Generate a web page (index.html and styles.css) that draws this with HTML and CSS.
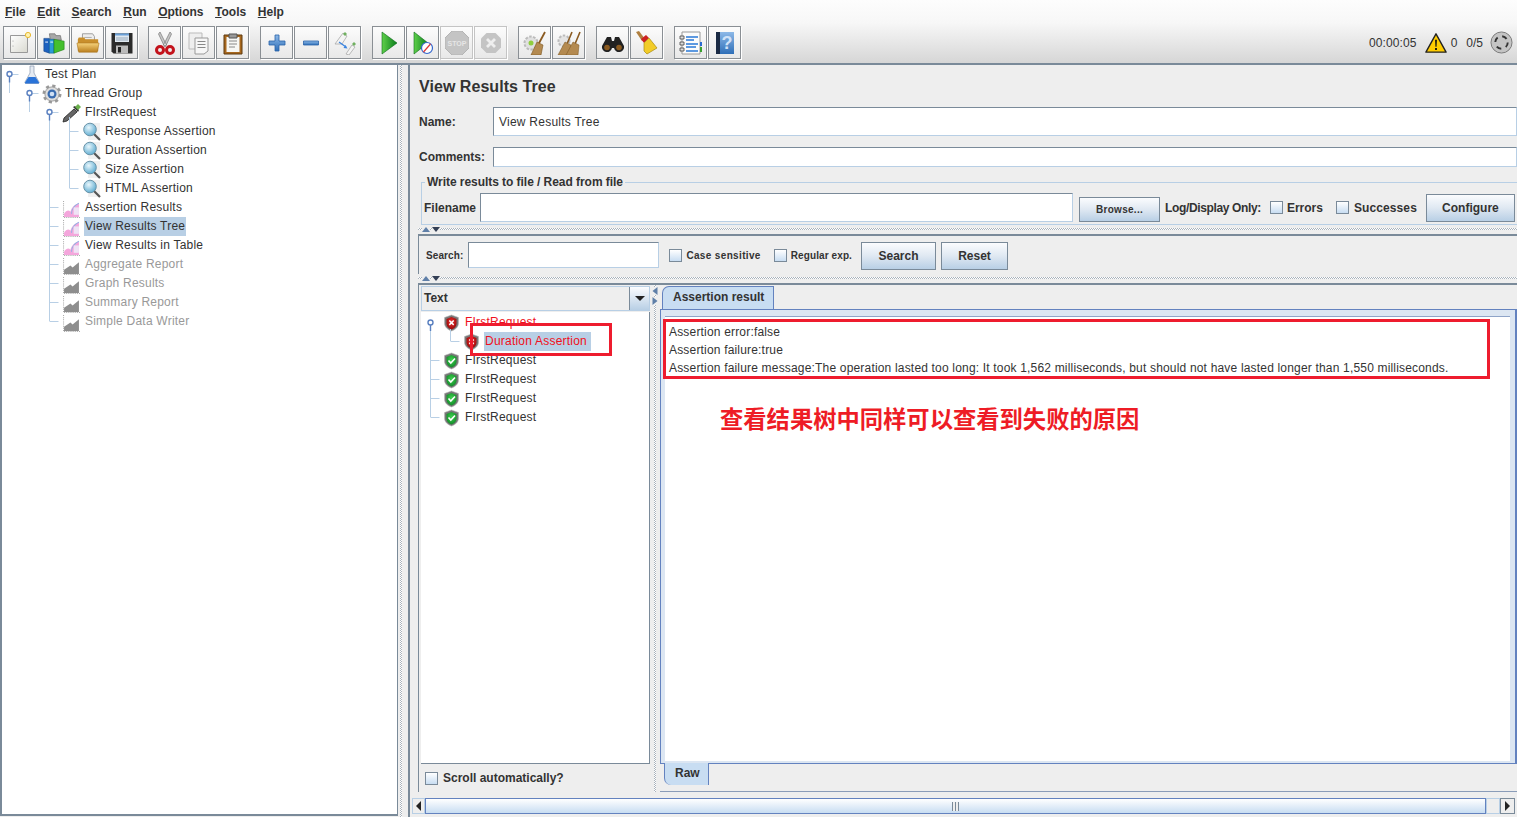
FILE: index.html
```html
<!DOCTYPE html>
<html lang="en">
<head>
<meta charset="utf-8">
<title>Apache JMeter</title>
<link rel="stylesheet" href="styles.css">
</head>
<body>
<svg class="defs" width="0" height="0" aria-hidden="true">
  <defs>
    <linearGradient id="gPage" x1="0" y1="0" x2="1" y2="1"><stop offset="0" stop-color="#fff"/><stop offset="1" stop-color="#d9d9d0"/></linearGradient>
    <linearGradient id="gFolder" x1="0" y1="0" x2="0" y2="1"><stop offset="0" stop-color="#f6d27a"/><stop offset="1" stop-color="#b97d1c"/></linearGradient>
    <linearGradient id="gBlue" x1="0" y1="0" x2="0" y2="1"><stop offset="0" stop-color="#8db9e8"/><stop offset="1" stop-color="#2f6fb8"/></linearGradient>
    <linearGradient id="gGreen" x1="0" y1="0" x2="1" y2="0"><stop offset="0" stop-color="#5fd04a"/><stop offset="1" stop-color="#0a7d1c"/></linearGradient>
    <radialGradient id="gLens" cx=".4" cy=".35" r=".7"><stop offset="0" stop-color="#e8f6fc"/><stop offset="1" stop-color="#58a9cf"/></radialGradient>
    <radialGradient id="gRed" cx=".5" cy=".4" r=".7"><stop offset="0" stop-color="#e33"/><stop offset="1" stop-color="#800"/></radialGradient>
    <radialGradient id="gGrn" cx=".5" cy=".4" r=".7"><stop offset="0" stop-color="#3fd24f"/><stop offset="1" stop-color="#0a7d22"/></radialGradient>

    <symbol id="i-new" viewBox="0 0 24 24"><path d="M2.500 4.500h17v17h-17z" fill="url(#gPage)" stroke="#999"/><circle cx="5" cy="10" r=".6" fill="#999"/><circle cx="5" cy="15" r=".6" fill="#999"/><circle cx="20" cy="4" r="2.600" fill="#fff3b0" stroke="#e8b830"/></symbol>
    <symbol id="i-templates" viewBox="0 0 26 24"><path d="M8 2h6l1 2h5l1 5H9z" fill="#a8a8a8" stroke="#666" stroke-width=".7"/><path d="M2 7h6v16l-6-2z" fill="#1d62c0" stroke="#0c3a80" stroke-width=".6"/><path d="M8 8h5v15H8z" fill="#2b9bd8" stroke="#0c5a90" stroke-width=".6"/><path d="M13 8l11 2v9l-11 4z" fill="#45c02e" stroke="#1e7a14" stroke-width=".6"/><path d="M3.500 11h3M9 11h3" stroke="#fff"/></symbol>
    <symbol id="i-open" viewBox="0 0 26 24"><path d="M7 2h11l2 3v10H7z" fill="#eee" stroke="#999"/><path d="M9 6h8M9 9h8" stroke="#aaa"/><path d="M2 8l1-2h6l1 2h14v13H2z" fill="#c98f2c"/><path d="M1 12h24l-2 10H3z" fill="url(#gFolder)" stroke="#a87420" stroke-width=".6"/></symbol>
    <symbol id="i-save" viewBox="0 0 24 24"><path d="M1.500 2h21v20.500h-19l-2-2z" fill="#2b2b2b"/><path d="M5 2.500h14v8.500H5z" fill="#dfe8f0"/><path d="M5 2.500h14v2H5z" fill="#6aa0d8"/><path d="M6 7h12M6 9h12" stroke="#9ab"/><path d="M6 14.500h12v8H6z" fill="#bbb"/><path d="M8 16h3v5.500H8z" fill="#222"/></symbol>
    <symbol id="i-cut" viewBox="0 0 24 24"><path d="M7 1l6.500 13-2 1.500L5.500 3zM17 1l-6.500 13 2 1.500L18.500 3z" fill="#c8c8c8" stroke="#777" stroke-width=".7"/><circle cx="7" cy="19" r="3.500" fill="none" stroke="#c3131c" stroke-width="3"/><circle cx="17" cy="19" r="3.500" fill="none" stroke="#c3131c" stroke-width="3"/></symbol>
    <symbol id="i-copy" viewBox="0 0 24 24"><path d="M2 2h13v16H2z" fill="#eee" stroke="#bbb"/><path d="M8 7h13v13l-4 3H8z" fill="#f6f6f6" stroke="#999"/><path d="M10.500 10.500h8M10.500 13.500h8M10.500 16.500h8" stroke="#888"/></symbol>
    <symbol id="i-paste" viewBox="0 0 24 24"><path d="M3 4h18v19H3z" fill="#a8681e" stroke="#5e3a10"/><path d="M5.500 6h13v15h-13z" fill="#f7f7f4"/><path d="M8 3h8v4H8z" fill="#999" stroke="#555"/><path d="M8 10h8M8 13h8M8 16h6" stroke="#888"/></symbol>
    <symbol id="i-plus" viewBox="0 0 24 24"><path d="M10 4h4v6h6v4h-6v6h-4v-6H4v-4h6z" fill="url(#gBlue)" stroke="#2a62a8" stroke-width=".8"/></symbol>
    <symbol id="i-minus" viewBox="0 0 24 24"><path d="M4.500 10h15v4h-15z" fill="url(#gBlue)" stroke="#2a62a8" stroke-width=".8"/></symbol>
    <symbol id="i-toggle" viewBox="0 0 24 24"><path d="M2 13L10 2l4 3-5 8z" fill="#f4f4f4" stroke="#aaa" stroke-width=".8"/><path d="M10 3l2-2 2 2-2 2z" fill="#70b060"/><path d="M13 23l6-9 3 2-6 8z" fill="#f4f4f4" stroke="#aaa" stroke-width=".8"/><path d="M19 13l2-2 2 2-2 2z" fill="#70b060"/><path d="M6 11l7 5" stroke="#3a84e0" stroke-width="1.300"/><path d="M14.500 17.500l-4-.5 2-3z" fill="#3a84e0"/></symbol>
    <symbol id="i-play" viewBox="0 0 24 24"><path d="M5 1l15 11L5 23z" fill="url(#gGreen)" stroke="#0a6a18" stroke-width=".6"/></symbol>
    <symbol id="i-playno" viewBox="0 0 24 24"><path d="M3 1l14 11L3 23z" fill="url(#gGreen)" stroke="#0a6a18" stroke-width=".6"/><circle cx="16" cy="17" r="5.500" fill="#fff" stroke="#3366cc" stroke-width="1.200"/><path d="M12.500 21l7-8" stroke="#d33" stroke-width="1.200"/></symbol>
    <symbol id="i-stop" viewBox="0 0 24 24"><path d="M7 0h10l7 7v10l-7 7H7l-7-7V7z" fill="#c4c4c4" stroke="#b4b4b4"/><text x="12" y="15" class="stop-txt">STOP</text></symbol>
    <symbol id="i-shut" viewBox="0 0 24 24"><path d="M7.500 2h9L22 7.500v9L16.500 22h-9L2 16.500v-9z" fill="#c4c4c4"/><path d="M8 8l8 8M16 8l-8 8" stroke="#eee" stroke-width="2.800"/></symbol>
    <symbol id="i-clear" viewBox="0 0 24 24"><circle cx="8" cy="12" r="6.500" fill="#e0e0e0" stroke="#bbb" stroke-dasharray="2.500 1.500" stroke-width="2"/><circle cx="8" cy="12" r="2.500" fill="#8fce3e"/><path d="M22 1l-7 13" stroke="#8a5a20" stroke-width="1.800"/><path d="M14 11l6 3 -2 10H8z" fill="#b48a50" stroke="#7a5520" stroke-width=".6"/></symbol>
    <symbol id="i-clearall" viewBox="0 0 24 24"><circle cx="7" cy="10" r="5.500" fill="#e4e4e4" stroke="#bbb" stroke-dasharray="2.500 1.500" stroke-width="2"/><path d="M15 1l-5 12M23 1l-5 12" stroke="#8a5a20" stroke-width="1.600"/><path d="M8 11l6 3 -1 10H1z" fill="#b48a50" stroke="#7a5520" stroke-width=".5"/><path d="M16 11l6 3 -1 10H9z" fill="#b48a50" stroke="#7a5520" stroke-width=".5"/></symbol>
    <symbol id="i-binoc" viewBox="0 0 24 24"><path d="M6 6h4l1 4h2l1-4h4l5 9a5 5 0 1 1-10 2h-2a5 5 0 1 1-10-2z" fill="#222"/><circle cx="6" cy="16.500" r="2.800" fill="#8a5a20"/><circle cx="18" cy="16.500" r="2.800" fill="#8a5a20"/></symbol>
    <symbol id="i-broom" viewBox="0 0 24 24"><path d="M1 1l3-1 6 8-3 2z" fill="#b08040"/><path d="M6 8l5-4 3 3-5 5z" fill="#cc2222"/><path d="M9 12l5-5 8 10-10 6-3-3z" fill="#f2cc28" stroke="#a88a10" stroke-width=".7"/></symbol>
    <symbol id="i-list" viewBox="0 0 24 24"><path d="M3 1h18v22H3z" fill="#fbfbfb" stroke="#999"/><path d="M1 5h4v3H1zM1 11h4v3H1zM1 17h4v3H1z" fill="#ddd" stroke="#444" stroke-width=".8"/><path d="M7 6h12M7 9h8M7 13h12M7 16h10M7 20h12" stroke="#2a7ad8" stroke-width="1.300"/><path d="M21 11h2v4h-2z" fill="#2a6ad0"/><path d="M21 16h2v5h-2z" fill="#3aa030"/></symbol>
    <symbol id="i-help" viewBox="0 0 24 24"><path d="M3 1h18v22H3z" fill="url(#gBlue)"/><path d="M3 1h4v22H3z" fill="#1a2a44"/><text x="14" y="18" class="help-txt">?</text></symbol>
    <symbol id="i-warn" viewBox="0 0 24 24"><path d="M12 2l11 20H1z" fill="#fc0" stroke="#222" stroke-width="1.500" stroke-linejoin="round"/><path d="M11 8.500h2l-.4 7.500h-1.200zM11 17.500h2v2h-2z" fill="#111"/></symbol>
    <symbol id="i-global" viewBox="0 0 24 24"><circle cx="12" cy="12" r="11" fill="#c4c4c4" stroke="#777"/><circle cx="12" cy="12" r="6.500" fill="none" stroke="#333" stroke-width="2" stroke-dasharray="5.200 5"/></symbol>

    <symbol id="i-flask" viewBox="0 0 20 20"><path d="M8 1h4v7l5 9a1 1 0 0 1-1 1.500H4A1 1 0 0 1 3 17l5-9z" fill="#e4eaf2" stroke="#8a9ab0" stroke-width=".7"/><path d="M6.500 12h7l3.500 5.500a.7.7 0 0 1-.7 1H3.700a.7.7 0 0 1-.7-1z" fill="#2a73d8"/></symbol>
    <symbol id="i-gear" viewBox="0 0 20 20"><circle cx="10" cy="10" r="8" fill="#e6e6e6" stroke="#999" stroke-width="3" stroke-dasharray="3.100 3.180"/><circle cx="10" cy="10" r="7" fill="#ddd" stroke="#888" stroke-width=".6"/><circle cx="10" cy="10" r="4.500" fill="#3a6cb0"/><circle cx="10" cy="10" r="2.300" fill="#d0e0f4"/></symbol>
    <symbol id="i-pipette" viewBox="0 0 20 20"><path d="M1 19l1-4L12 6l3 3-10 9z" fill="#666" stroke="#222" stroke-width=".8"/><path d="M11 4l2-1 4 4-1 2z" fill="#333"/><path d="M13 4l3-3 3 3-3 3z" fill="#6ab04c"/></symbol>
    <symbol id="i-lens" viewBox="0 0 20 20"><path d="M6 1h12v17H6z" fill="#f0f0f0"/><path d="M11 11l7 7" stroke="#555" stroke-width="2.200"/><circle cx="8" cy="7.500" r="6.300" fill="url(#gLens)" stroke="#6a93a8"/></symbol>
    <symbol id="i-graph" viewBox="0 0 16 16"><path d="M.5 0v15.500H16" fill="none" stroke="#aaa" stroke-dasharray="1 1"/><path d="M1 15v-3c2-3 4-4 6-2 1-4 4-7 8-8v13z" fill="#f4a6dc"/><path d="M8 12c0-4 3-8 7-10" fill="none" stroke="#8fb4e4"/><path d="M10 6h5v7h-5z" fill="#eef3fb" opacity=".8"/></symbol>
    <symbol id="i-graphoff" viewBox="0 0 16 16"><path d="M.5 0v15.500H16" fill="none" stroke="#aaa" stroke-dasharray="1 1"/><path d="M1 15v-4l6-4 2 2 6-5v11z" fill="#8e8e8e"/></symbol>
    <symbol id="i-bad" viewBox="0 0 16 18"><path d="M8 1l7 2.500V9c0 4-3 6.500-7 8-4-1.500-7-4-7-8V3.500z" fill="#777" stroke="#bbb" stroke-width=".6"/><path d="M8 3l5 2v4.500c0 3-2 4.800-5 6-3-1.200-5-3-5-6V5z" fill="url(#gRed)"/><path d="M5.800 6.500l4.400 4.400M10.200 6.500l-4.400 4.400" stroke="#fff" stroke-width="1.500"/></symbol>
    <symbol id="i-good" viewBox="0 0 16 18"><path d="M8 1l7 2.500V9c0 4-3 6.500-7 8-4-1.500-7-4-7-8V3.500z" fill="#777" stroke="#bbb" stroke-width=".6"/><path d="M8 3l5 2v4.500c0 3-2 4.800-5 6-3-1.200-5-3-5-6V5z" fill="url(#gGrn)"/><path d="M5 8.500l2.300 2.500L11.500 6.500" fill="none" stroke="#fff" stroke-width="1.700"/></symbol>
    <symbol id="i-up" viewBox="0 0 8 5"><path d="M4 0l4 5H0z" fill="#5f7fa8"/></symbol>
    <symbol id="i-down" viewBox="0 0 8 5"><path d="M0 0h8L4 5z" fill="#333f55"/></symbol>
  </defs>
</svg>

<div class="app">
  <nav class="menubar">
    <span class="menu"><u>F</u>ile</span>
    <span class="menu"><u>E</u>dit</span>
    <span class="menu"><u>S</u>earch</span>
    <span class="menu"><u>R</u>un</span>
    <span class="menu"><u>O</u>ptions</span>
    <span class="menu"><u>T</u>ools</span>
    <span class="menu"><u>H</u>elp</span>
  </nav>

  <header class="toolbar">
    <div class="tgroup first">
      <button class="tbtn"><svg class="ticon"><use href="#i-new"/></svg></button>
      <button class="tbtn"><svg class="ticon"><use href="#i-templates"/></svg></button>
      <button class="tbtn"><svg class="ticon"><use href="#i-open"/></svg></button>
      <button class="tbtn"><svg class="ticon"><use href="#i-save"/></svg></button>
    </div>
    <div class="tgroup">
      <button class="tbtn"><svg class="ticon"><use href="#i-cut"/></svg></button>
      <button class="tbtn"><svg class="ticon"><use href="#i-copy"/></svg></button>
      <button class="tbtn"><svg class="ticon"><use href="#i-paste"/></svg></button>
    </div>
    <div class="tgroup">
      <button class="tbtn"><svg class="ticon"><use href="#i-plus"/></svg></button>
      <button class="tbtn"><svg class="ticon"><use href="#i-minus"/></svg></button>
      <button class="tbtn"><svg class="ticon"><use href="#i-toggle"/></svg></button>
    </div>
    <div class="tgroup">
      <button class="tbtn"><svg class="ticon"><use href="#i-play"/></svg></button>
      <button class="tbtn"><svg class="ticon"><use href="#i-playno"/></svg></button>
      <button class="tbtn off"><svg class="ticon"><use href="#i-stop"/></svg></button>
      <button class="tbtn off"><svg class="ticon"><use href="#i-shut"/></svg></button>
    </div>
    <div class="tgroup">
      <button class="tbtn"><svg class="ticon"><use href="#i-clear"/></svg></button>
      <button class="tbtn"><svg class="ticon"><use href="#i-clearall"/></svg></button>
    </div>
    <div class="tgroup">
      <button class="tbtn"><svg class="ticon"><use href="#i-binoc"/></svg></button>
      <button class="tbtn"><svg class="ticon"><use href="#i-broom"/></svg></button>
    </div>
    <div class="tgroup">
      <button class="tbtn"><svg class="ticon"><use href="#i-list"/></svg></button>
      <button class="tbtn"><svg class="ticon"><use href="#i-help"/></svg></button>
    </div>
    <div class="status">
      <span class="s-time">00:00:05</span>
      <svg class="s-warn"><use href="#i-warn"/></svg>
      <span class="s-err">0</span>
      <span class="s-threads">0/5</span>
      <svg class="s-global"><use href="#i-global"/></svg>
    </div>
  </header>

  <main class="workspace">
    <section class="plan">
      <svg class="lines plan-lines" width="120" height="270">
        <path d="M9.500 12v16M9.500 9.500h9M29.500 31v16M29.500 28.500h9M49.500 50v206M49.500 47.500h9M69.500 52v71M69.500 66.500h9M69.500 85.500h9M69.500 104.500h9M69.500 123.500h9M49.500 142.500h9M49.500 161.500h9M49.500 180.500h9M49.500 199.500h9M49.500 218.500h9M49.500 237.500h9M49.500 256.500h9" class="line"/>
        <circle cx="9.500" cy="9" r="2.500" class="knob"/><path d="M9.500 11.500v6" class="knob-stem"/>
        <circle cx="29.500" cy="28" r="2.500" class="knob"/><path d="M29.500 30.500v6" class="knob-stem"/>
        <circle cx="49.500" cy="47" r="2.500" class="knob"/><path d="M49.500 49.500v6" class="knob-stem"/>
      </svg>
      <div class="row d0"><svg class="ico"><use href="#i-flask"/></svg><span class="lbl">Test Plan</span></div>
      <div class="row d1"><svg class="ico"><use href="#i-gear"/></svg><span class="lbl">Thread Group</span></div>
      <div class="row d2"><svg class="ico"><use href="#i-pipette"/></svg><span class="lbl">FIrstRequest</span></div>
      <div class="row d3"><svg class="ico"><use href="#i-lens"/></svg><span class="lbl">Response Assertion</span></div>
      <div class="row d3"><svg class="ico"><use href="#i-lens"/></svg><span class="lbl">Duration Assertion</span></div>
      <div class="row d3"><svg class="ico"><use href="#i-lens"/></svg><span class="lbl">Size Assertion</span></div>
      <div class="row d3"><svg class="ico"><use href="#i-lens"/></svg><span class="lbl">HTML Assertion</span></div>
      <div class="row d2"><svg class="ico small"><use href="#i-graph"/></svg><span class="lbl">Assertion Results</span></div>
      <div class="row d2"><svg class="ico small"><use href="#i-graph"/></svg><span class="lbl sel">View Results Tree</span></div>
      <div class="row d2"><svg class="ico small"><use href="#i-graph"/></svg><span class="lbl">View Results in Table</span></div>
      <div class="row d2 dim"><svg class="ico small"><use href="#i-graphoff"/></svg><span class="lbl">Aggregate Report</span></div>
      <div class="row d2 dim"><svg class="ico small"><use href="#i-graphoff"/></svg><span class="lbl">Graph Results</span></div>
      <div class="row d2 dim"><svg class="ico small"><use href="#i-graphoff"/></svg><span class="lbl">Summary Report</span></div>
      <div class="row d2 dim"><svg class="ico small"><use href="#i-graphoff"/></svg><span class="lbl">Simple Data Writer</span></div>
    </section>

    <div class="vsplit"></div>

    <section class="detail">
      <h1 class="title">View Results Tree</h1>
      <div class="field name-field"><label class="flabel">Name:</label><div class="input grow">View Results Tree</div></div>
      <div class="field comments-field"><label class="flabel">Comments:</label><div class="input grow"></div></div>

      <fieldset class="fileset">
        <legend class="legend">Write results to file / Read from file</legend>
        <div class="filerow">
          <span class="blabel">Filename</span>
          <div class="input filename"></div>
          <button class="btn browse">Browse...</button>
          <span class="blabel logonly">Log/Display Only:</span>
          <span class="check"></span><span class="blabel err-lbl">Errors</span>
          <span class="check"></span><span class="blabel succ-lbl">Successes</span>
          <button class="btn configure">Configure</button>
        </div>
      </fieldset>

      <div class="hsplit"><svg class="tri"><use href="#i-up"/></svg><svg class="tri"><use href="#i-down"/></svg></div>

      <div class="searchbar">
        <span class="sm-label search-lbl">Search:</span>
        <div class="input search-input"></div>
        <span class="check"></span><span class="sm-label case">Case sensitive</span>
        <span class="check"></span><span class="sm-label regex">Regular exp.</span>
        <button class="btn search-btn">Search</button>
        <button class="btn reset-btn">Reset</button>
      </div>

      <div class="hsplit"><svg class="tri"><use href="#i-up"/></svg><svg class="tri"><use href="#i-down"/></svg></div>

      <div class="lower">
        <div class="results-col">
          <div class="combo"><span class="combo-text">Text</span><span class="combo-btn"><i class="combo-arrow"></i></span></div>
          <div class="results-tree">
            <svg class="lines" width="40" height="120">
              <path d="M9.500 12v92M9.500 47.500h9M9.500 66.500h9M9.500 85.500h9M9.500 104.500h9M29.500 16v12M29.500 28.500h9" class="line"/>
              <circle cx="9.500" cy="9.500" r="2.500" class="knob"/><path d="M9.500 12v6" class="knob-stem"/>
            </svg>
            <div class="row r0 bad"><svg class="ico"><use href="#i-bad"/></svg><span class="lbl">FIrstRequest</span></div>
            <div class="row r1 bad"><svg class="ico"><use href="#i-bad"/></svg><span class="lbl sel">Duration Assertion</span></div>
            <div class="row r0"><svg class="ico"><use href="#i-good"/></svg><span class="lbl">FIrstRequest</span></div>
            <div class="row r0"><svg class="ico"><use href="#i-good"/></svg><span class="lbl">FIrstRequest</span></div>
            <div class="row r0"><svg class="ico"><use href="#i-good"/></svg><span class="lbl">FIrstRequest</span></div>
            <div class="row r0"><svg class="ico"><use href="#i-good"/></svg><span class="lbl">FIrstRequest</span></div>
          </div>
          <div class="scroll-auto"><span class="check"></span><span class="blabel">Scroll automatically?</span></div>
        </div>

        <div class="vsplit2"><svg class="tri-v"><use href="#i-up"/></svg><svg class="tri-v flip"><use href="#i-up"/></svg></div>

        <div class="result-col">
          <div class="tabs"><span class="tab">Assertion result</span></div>
          <div class="tabbody">
            <div class="resulttext">
              <p>Assertion error:false</p>
              <p>Assertion failure:true</p>
              <p>Assertion failure message:The operation lasted too long: It took 1,562 milliseconds, but should not have lasted longer than 1,550 milliseconds.</p>
            </div>
          </div>
          <div class="bottomtabs"><span class="tab raw">Raw</span></div>
        </div>
      </div>

      <div class="hscroll">
        <span class="sb-btn"><i class="arrow-l"></i></span>
        <span class="sb-thumb"><i class="grip"></i></span>
        <span class="sb-rest"></span>
        <span class="sb-btn right"><i class="arrow-r"></i></span>
      </div>
    </section>
  </main>

  <div class="mark mark-tree"></div>
  <div class="mark mark-text"></div>
  <div class="note">查看结果树中同样可以查看到失败的原因</div>
</div>
</body>
</html>
```
FILE: styles.css
```css
* { box-sizing: border-box; }
html, body { margin: 0; padding: 0; height: 100%; overflow: hidden; background: #fff; }
body { font: 12px "Liberation Sans", Arial, "Noto Sans CJK SC", sans-serif; color: #333; }
.defs { position: absolute; }
.stop-txt { font: bold 7px "Liberation Sans", sans-serif; fill: #e6e6e6; text-anchor: middle; }
.help-txt { font: bold 18px "Liberation Sans", sans-serif; fill: #cfe2f8; text-anchor: middle; }

.app { position: relative; width: 1517px; height: 817px; background: #eee; overflow: hidden; display: flex; flex-direction: column; }

/* top chrome */
.menubar { height: 23px; display: flex; align-items: center; padding-left: 5px; gap: 11.600px; background: linear-gradient(#fdfdfd, #f7f7f7); }
.menu { font-weight: bold; color: #333; }
.toolbar { height: 40px; display: flex; align-items: flex-start; padding: 3px 0 0 3px; gap: 11px; background: linear-gradient(#f7f7f7, #d6d6d6); }
.tgroup { display: flex; gap: 1px; }
.tgroup.first { margin-right: -1px; }
.tbtn { width: 33px; height: 33px; padding: 0; display: flex; align-items: center; justify-content: center; border: 1px solid #8a8f94; background: linear-gradient(#fcfcfc, #e8e8e8); box-shadow: 1px 1px 0 #fff; }
.tbtn.off { border-color: #c4c4c4; }
.ticon { width: 24px; height: 24px; }
.status { margin-left: auto; height: 33px; display: flex; align-items: center; color: #333; padding-right: 4px; }
.s-time { margin-right: 8px; letter-spacing: .12px; }
.s-warn { width: 22px; height: 22px; margin-right: 4px; }
.s-err { margin-right: 9px; }
.s-threads { margin-right: 7px; }
.s-global { width: 23px; height: 23px; }

.workspace { flex: 1; display: flex; border-top: 2px solid #7a8a99; min-height: 0; }

/* plan tree */
.plan { position: relative; width: 398px; height: 751px; background: #fff; border-left: 2px solid #7a8a99; border-bottom: 2px solid #7a8a99; border-right: 1px solid #7a8a99; }
.vsplit { width: 10px; background-color: #eee; background-image: repeating-conic-gradient(#a9b2bb 0 25%, #fff 0 50%); background-size: 2px 2px; background-repeat: repeat-y; background-position: 2px 0; }

.lines { position: absolute; left: -2px; top: 0; pointer-events: none; }
.line { fill: none; stroke: #b8cfe5; stroke-width: 1; }
.knob { fill: #fff; stroke: #5a80c0; stroke-width: 1.400; }
.knob-stem { stroke: #5a80c0; stroke-width: 1.400; fill: none; }

.row { height: 19px; display: flex; align-items: center; white-space: nowrap; color: #333; }
.d0 { padding-left: 20px; }
.d1 { padding-left: 40px; }
.d2 { padding-left: 60px; }
.d3 { padding-left: 80px; }
.ico { width: 20px; height: 20px; margin-right: 2px; flex: none; }
.ico.small { width: 17px; height: 17px; margin: 4px 4px 0 1px; }
.lbl { padding: 2px 1px 3px; line-height: 14px; letter-spacing: .22px; }
.sel { background: #b8cfe5; }
.dim .lbl { color: #999; }
.bad .lbl { color: #f01020; }

/* details */
.detail { flex: 1; min-width: 0; border-left: 2px solid #7a8a99; padding-left: 9px; display: flex; flex-direction: column; }
.title { margin: 0; height: 42px; font: bold 16px/44px "Liberation Sans", sans-serif; letter-spacing: .05px; color: #333; }
.field { display: flex; align-items: center; }
.flabel { width: 74px; font-weight: bold; flex: none; }
.name-field { height: 29px; margin-bottom: 11px; }
.comments-field { height: 20px; margin-bottom: 8px; }
.input { height: 100%; background: #fff; border: 1px solid #7a8a99; border-right-color: #b8cfe5; border-bottom-color: #b8cfe5; padding-left: 5px; line-height: 28px; letter-spacing: .24px; }
.grow { flex: 1; }

.fileset { margin: 0 0 0 2px; padding: 4px 2px 3px; border: 1px solid #b8cfe5; border-right: 0; height: 50px; min-width: 0; }
.legend { padding: 0 2px; margin-left: 1px; font-weight: bold; line-height: 14px; letter-spacing: -.05px; color: #333; }
.filerow { height: 29px; display: flex; align-items: center; }
.blabel { font-weight: bold; white-space: nowrap; flex: none; }
.filename { width: 593px; margin-left: 4px; flex: none; }
.btn { font: bold 12px "Liberation Sans", sans-serif; color: #333; padding: 0; flex: none; background: linear-gradient(#fbfcfe, #dfe8f2 50%, #b8cfe5); border: 1px solid #7a8a99; }
.browse { width: 81px; height: 25px; margin: 3px 5px 0 6px; font-size: 10px; letter-spacing: .3px; }
.logonly { margin-right: 9px; letter-spacing: -.36px; }
.check { width: 13px; height: 13px; flex: none; border: 1px solid #7a8a99; background: linear-gradient(#fff, #c8ddf2); display: inline-block; }
.err-lbl { margin: 0 13px 0 4px; }
.succ-lbl { margin: 0 9px 0 5px; letter-spacing: .1px; }
.configure { width: 89px; height: 28px; }

.hsplit { height: 10px; margin-left: -1px; display: flex; align-items: flex-start; gap: 2px; padding: 2px 0 0 4px; background-image: repeating-conic-gradient(#a9b2bb 0 25%, #fff 0 50%); background-size: 2px 2px; background-repeat: repeat-x; background-position: 0 3px; background-color: #eee; }
.tri { width: 8px; height: 5px; background: #eee; }

.searchbar { height: 40px; margin-left: -1px; border-top: 2px solid #7a8a99; border-left: 1px solid #7a8a99; display: flex; align-items: flex-start; padding: 6px 0 0 7px; margin-top: -1px; }
.sm-label { font-size: 10px; font-weight: bold; letter-spacing: .35px; white-space: nowrap; margin-top: 8px; flex: none; }
.search-lbl { letter-spacing: .1px; }
.search-input { width: 191px; height: 26px; margin: 0 10px 0 5px; flex: none; }
.searchbar .check { margin-top: 7px; }
.case { margin: 8px 13px 0 4px; }
.regex { margin: 8px 9px 0 4px; letter-spacing: .1px; }
.search-btn { width: 75px; height: 28px; margin-right: 5px; }
.reset-btn { width: 67px; height: 28px; }

.lower { height: 509px; margin-left: -1px; margin-top: -1px; border-top: 2px solid #7a8a99; border-left: 1px solid #7a8a99; display: flex; }
.results-col { width: 231px; padding-left: 2px; display: flex; flex-direction: column; height: 507px; }
.combo { height: 25px; margin-top: 1px; display: flex; background: #eee; border: 1px solid #b8cfe5; font-weight: bold; line-height: 23px; }
.combo-text { flex: 1; padding-left: 2px; }
.combo-btn { width: 20px; display: flex; align-items: center; justify-content: center; border-left: 1px solid #7a8a99; background: linear-gradient(#fbfcfe, #b8cfe5); }
.combo-arrow { width: 0; height: 0; border-left: 5px solid transparent; border-right: 5px solid transparent; border-top: 5px solid #222; }
.results-tree { position: relative; height: 452px; margin-top: 1px; padding-top: 1px; background: #fff; border-right: 1px solid #7a8a99; border-bottom: 1px solid #7a8a99; }
.results-tree .lines { left: 0; top: 1px; }
.results-tree .ico { width: 17px; height: 18px; margin-right: 4px; }
.results-tree .sel { padding-right: 4px; }
.r0 { padding-left: 22px; }
.r1 { padding-left: 42px; }
.scroll-auto { flex: 1; display: flex; align-items: center; gap: 5px; padding-left: 4px; }

.vsplit2 { width: 10px; position: relative; display: flex; flex-direction: column; align-items: center; gap: 2px; padding-top: 2px; background-image: repeating-conic-gradient(#a9b2bb 0 25%, #fff 0 50%); background-size: 2px 2px; background-repeat: repeat-y; background-position: 4px 0; }
.tri-v { width: 8px; height: 8px; transform: rotate(-90deg); background: #eee; }
.tri-v.flip { transform: rotate(90deg); }

.result-col { flex: 1; min-width: 0; height: 507px; display: flex; flex-direction: column; border-bottom: 1px solid #8a9cb8; padding-top: 1px; }
.tabs { height: 23px; padding-left: 2px; display: flex; }
.tab { display: block; height: 23px; padding: 2px 10px; font-weight: bold; line-height: 17px; white-space: nowrap; background: #c8ddf2; border: 1px solid #6382bf; border-bottom: 0; border-top-left-radius: 7px; }
.tabs .tab { width: 112px; }
.tabbody { height: 455px; border: 1px solid #6382bf; border-right-width: 2px; padding: 6px 5px 2px 4px; background: #dce6f2; }
.resulttext { height: 100%; background: #fff; padding: 6px 0 0 4px; border-top: 1px solid #8fa4c8; }
.resulttext p { margin: 0; height: 18px; line-height: 18px; color: #333; white-space: nowrap; letter-spacing: .18px; }
.bottomtabs { padding-left: 4px; }
.tab.raw { width: 45px; height: 22px; padding: 2px 10px; border-top: 0; border-radius: 0 0 0 7px; margin-top: -1px; position: relative; }

.hscroll { height: 16px; margin: 6px 0 0 -7px; display: flex; align-items: stretch; padding-right: 2px; }
.sb-btn { width: 13px; display: flex; align-items: center; justify-content: center; border: 1px solid #b8cfe5; background: #eee; flex: none; }
.sb-btn.right { width: 15px; border-color: #7a8a99; }
.arrow-l { width: 0; height: 0; border: 5px solid transparent; border-right-color: #222; border-left: 0; }
.arrow-r { width: 0; height: 0; border: 5px solid transparent; border-left-color: #222; border-right: 0; }
.sb-thumb { flex: 1; display: flex; align-items: center; justify-content: center; border: 1px solid #6382bf; background: linear-gradient(#fff, #c8ddf2); }
.grip { width: 7px; height: 9px; background: repeating-linear-gradient(90deg, #7a8a99 0 1px, #eee 1px 3px); }
.sb-rest { width: 14px; flex: none; border: 1px solid #b8cfe5; background: #eee; }

/* red annotations pasted over the screenshot */
.mark { position: absolute; border: 3px solid #ee1c2e; }
.mark-tree { left: 470px; top: 323px; width: 142px; height: 33px; }
.mark-text { left: 663px; top: 319px; width: 827px; height: 60px; }
.note { position: absolute; left: 720px; top: 402px; font: bold 23.300px/32px "Noto Sans CJK SC", sans-serif; color: #ee1c25; white-space: nowrap; }
```
